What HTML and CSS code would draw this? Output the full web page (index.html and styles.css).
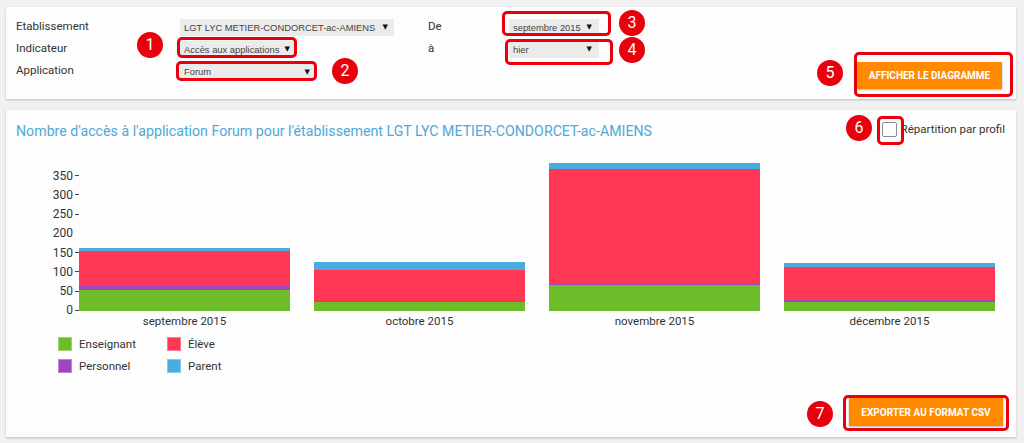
FILE: index.html
```html
<!DOCTYPE html>
<html lang="fr">
<head>
<meta charset="utf-8">
<title>Statistiques</title>
<link rel="stylesheet" href="styles.css">
</head>
<body>
<div class="page">
  <section class="panel filters">
    <div class="form-grid">
      <span class="lbl">Etablissement</span>
      <div class="col"><div class="sel w214"><span>LGT LYC METIER-CONDORCET-ac-AMIENS</span><i>▼</i></div></div>
      <span class="lbl">De</span>
      <div class="col"><div class="sel w90"><span>septembre 2015</span><i>▼</i></div></div>

      <span class="lbl">Indicateur</span>
      <div class="col"><div class="sel w114"><span>Accès aux applications</span><i>▼</i></div></div>
      <span class="lbl">à</span>
      <div class="col"><div class="sel w90"><span>hier</span><i>▼</i></div></div>

      <span class="lbl">Application</span>
      <div class="col"><div class="sel w134"><span>Forum</span><i>▼</i></div></div>
    </div>
    <button class="btn btn-show">AFFICHER LE DIAGRAMME</button>

    <span class="ring r1"></span><span class="badge b1">1</span>
    <span class="ring r2"></span><span class="badge b2">2</span>
    <span class="ring r3"></span><span class="badge b3">3</span>
    <span class="ring r4"></span><span class="badge b4">4</span>
    <span class="ring r5"></span><span class="badge b5">5</span>
  </section>

  <section class="panel chart-panel">
    <header class="chart-head">
      <h2 class="title">Nombre d'accès à l'application Forum pour l'établissement LGT LYC METIER-CONDORCET-ac-AMIENS</h2>
      <label class="check"><span class="box"></span>Répartition par profil</label>
    </header>

    <div class="chart">
      <div class="yaxis">
        <span class="tk">350</span>
        <span class="tk">300</span>
        <span class="tk">250</span>
        <span>200</span>
        <span class="tk">150</span>
        <span class="tk">100</span>
        <span class="tk">50</span>
        <span class="tk">0</span>
      </div>
      <div class="bars">
        <div class="bar-col">
          <div class="plot">
            <div class="seg parent" style="height:2.5px"></div>
            <div class="seg eleve" style="height:35.5px"></div>
            <div class="seg perso" style="height:3.5px"></div>
            <div class="seg ens" style="height:21px"></div>
          </div>
          <div class="xl">septembre 2015</div>
        </div>
        <div class="bar-col">
          <div class="plot">
            <div class="seg parent" style="height:7.5px"></div>
            <div class="seg eleve" style="height:31.5px"></div>
            <div class="seg perso" style="height:0.8px"></div>
            <div class="seg ens" style="height:8.5px"></div>
          </div>
          <div class="xl">octobre 2015</div>
        </div>
        <div class="bar-col">
          <div class="plot">
            <div class="seg parent" style="height:6px"></div>
            <div class="seg eleve" style="height:115.3px"></div>
            <div class="seg perso" style="height:0.7px"></div>
            <div class="seg ens" style="height:26px"></div>
          </div>
          <div class="xl">novembre 2015</div>
        </div>
        <div class="bar-col">
          <div class="plot">
            <div class="seg parent" style="height:4px"></div>
            <div class="seg eleve" style="height:33.3px"></div>
            <div class="seg perso" style="height:1.7px"></div>
            <div class="seg ens" style="height:9px"></div>
          </div>
          <div class="xl">décembre 2015</div>
        </div>
      </div>
    </div>

    <ul class="legend">
      <li><span class="sw ens"></span>Enseignant</li>
      <li><span class="sw eleve"></span>Élève</li>
      <li><span class="sw perso"></span>Personnel</li>
      <li><span class="sw parent"></span>Parent</li>
    </ul>

    <footer class="chart-foot">
      <button class="btn btn-csv">EXPORTER AU FORMAT CSV</button>
    </footer>

    <span class="ring r6"></span><span class="badge b6">6</span>
    <span class="ring r7"></span><span class="badge b7">7</span>
  </section>
</div>
</body>
</html>
```

FILE: styles.css
```css
* { box-sizing: border-box; }
html, body { margin: 0; padding: 0; }
body {
  background: #f1f1f1;
  font-family: Roboto, "Liberation Sans", Arial, sans-serif;
  color: #333;
  width: 1024px;
  height: 443px;
  overflow: hidden;
}
.page {
  padding: 7px 8px 0 6px;
  display: flex;
  flex-direction: column;
  gap: 11px;
}
.panel {
  position: relative;
  background: #fdfdfd;
  box-shadow: 0 1px 2px rgba(0,0,0,0.22);
}

/* ---------- filters ---------- */
.filters {
  height: 92px;
  padding: 11px 14px 10px 10px;
  display: flex;
}
.form-grid {
  display: grid;
  grid-template-columns: 164px 248px 81px 91px;
  grid-template-rows: 18px 18px 18px;
  row-gap: 4.3px;
  align-items: center;
}
.lbl {
  font-size: 11.5px;
  color: #333;
  line-height: 16px;
  padding-bottom: 3px;
}
.col { display: flex; align-items: center; }
.sel {
  height: 17px;
  background: #ebebeb;
  display: flex;
  align-items: center;
  justify-content: space-between;
  padding: 0 4px 0 4px;
  font-family: "Liberation Sans", Arial, sans-serif;
  font-size: 9.4px;
  color: #444;
  white-space: nowrap;
}
.sel i {
  font-style: normal;
  font-family: "DejaVu Sans", sans-serif;
  font-size: 7px;
  color: #111;
}
.w214 { width: 214px; padding-right: 6px; }
.w114 { width: 114px; }
.w134 { width: 134px; }
.w90 { width: 90px; padding-right: 7px; }

.btn {
  border: 0;
  background: #ff8a00;
  color: #fff;
  font-family: Roboto, "Liberation Sans", sans-serif;
  font-weight: 700;
  font-size: 10px;
  height: 27px;
  box-shadow: 0 1px 2px rgba(0,0,0,0.3);
  padding: 0;
  cursor: pointer;
}
.btn-show {
  margin-left: auto;
  align-self: flex-end;
  width: 145px;
}

/* ---------- chart panel ---------- */
.chart-panel {
  height: 327px;
  padding: 12px 11px 11px 0;
  display: flex;
  flex-direction: column;
}
.chart-head {
  display: flex;
  align-items: center;
  justify-content: space-between;
  height: 18px;
  padding-left: 10px;
}
.title {
  margin: 0;
  font-weight: 400;
  font-size: 14.2px;
  color: #4ea9d9;
  line-height: 18px;
}
.check {
  display: flex;
  align-items: center;
  font-size: 11.5px;
  color: #333;
  margin-top: -4px;
}
.box {
  width: 15px;
  height: 15px;
  border: 1px solid #8c8c8c;
  border-radius: 2px;
  background: #fff;
  margin-right: 4px;
}

.chart {
  display: flex;
  margin-top: 20px;
}
.yaxis {
  width: 73px;
  height: 149px;
  margin-top: 8.5px;
  display: flex;
  flex-direction: column;
  justify-content: space-between;
  font-size: 12px;
  color: #333;
}
.yaxis span {
  height: 14px;
  line-height: 14px;
  display: flex;
  align-items: center;
  justify-content: flex-end;
  padding-right: 6px;
}
.yaxis span.tk { padding-right: 0; }
.yaxis span.tk::after {
  content: "";
  width: 4px;
  height: 1px;
  background: #444;
  margin-left: 2px;
}
.bars {
  display: flex;
  gap: 24px;
}
.bar-col {
  width: 211px;
  display: flex;
  flex-direction: column;
}
.plot {
  height: 150.5px;
  display: flex;
  flex-direction: column;
  justify-content: flex-end;
}
.seg { width: 100%; }
.ens { background: #6dbd2a; }
.eleve { background: #ff3754; }
.perso { background: #9f45c4; }
.parent { background: #48acdf; }

.xl {
  margin-top: 3px;
  height: 14px;
  line-height: 14px;
  text-align: center;
  font-size: 11.5px;
  color: #333;
}

.legend {
  list-style: none;
  margin: 9px 0 0 52px;
  padding: 0;
  display: grid;
  grid-template-columns: 109px 100px;
  row-gap: 8px;
  font-size: 11.5px;
  color: #333;
}
.legend li {
  display: flex;
  align-items: center;
  height: 14px;
}
.sw {
  width: 14px;
  height: 14px;
  margin-right: 7px;
  box-shadow: inset 0 0 0 1px rgba(255,255,255,0.35);
}

.chart-foot {
  margin-top: auto;
  display: flex;
  justify-content: flex-end;
  padding-right: 2px;
}
.btn-csv {
  width: 154px;
  height: 28px;
}

/* ---------- annotations (overlays) ---------- */
.ring {
  position: absolute;
  border: 3px solid #e8000d;
  border-radius: 5px;
  pointer-events: none;
}
.badge {
  position: absolute;
  width: 26px;
  height: 26px;
  border-radius: 50%;
  background: #e8000d;
  color: #fff;
  font-size: 16px;
  line-height: 26px;
  text-align: center;
  font-family: Roboto, "Liberation Sans", sans-serif;
}
.r1 { left: 171px; top: 30px; width: 120px; height: 21px; }
.b1 { left: 131px; top: 25px; }
.r2 { left: 170px; top: 54px; width: 141px; height: 20px; }
.b2 { left: 326px; top: 51px; }
.r3 { left: 496px; top: 4px; width: 109px; height: 25px; }
.b3 { left: 613px; top: 3px; }
.r4 { left: 499px; top: 32px; width: 108px; height: 26px; }
.b4 { left: 613px; top: 30px; }
.r5 { left: 848px; top: 45px; width: 159px; height: 45px; }
.b5 { left: 811px; top: 53px; }

.r6 { left: 871px; top: 6px; width: 27px; height: 29px; }
.b6 { left: 840px; top: 5px; }
.r7 { left: 837px; top: 285px; width: 166px; height: 36px; }
.b7 { left: 801px; top: 291px; }
```
